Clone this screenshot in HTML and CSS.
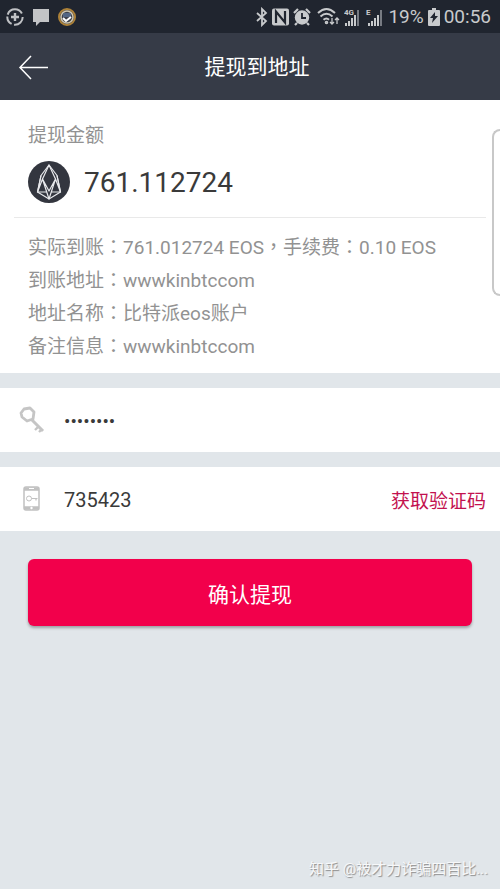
FILE: index.html
```html
<!DOCTYPE html>
<html lang="zh-CN">
<head>
<meta charset="utf-8">
<meta name="viewport" content="width=device-width, initial-scale=1">
<title>提现到地址</title>
<link rel="stylesheet" href="styles.css">
</head>
<body>
<div class="status">
  <div class="status-left">
    <svg width="20" height="20" viewBox="0 0 20 20" fill="none" stroke="#bfc1c4"><circle cx="10" cy="10" r="7.7" stroke-width="2" stroke-dasharray="13 2.5 9 2 18 3.9"/><path d="M10 6v8M6 10h8" stroke-width="2.4"/></svg>
    <svg width="18" height="20" viewBox="0 0 18 20"><path d="M1 2h16v13H8l-4 4v-4H1z" fill="#c3c4c6"/></svg>
    <svg width="20" height="20" viewBox="0 0 20 20"><circle cx="10" cy="10" r="8" fill="#3b414e" stroke="#ad8238" stroke-width="2"/><circle cx="10" cy="10" r="6" fill="none" stroke="#cfc6ae" stroke-width="1.5"/><path d="M6 6h8v4H6z" fill="#526684"/><path d="M6 11l3 3 5-4" fill="none" stroke="#fff" stroke-width="2"/></svg>
  </div>
  <div class="status-right">
    <svg width="12" height="20" viewBox="0 0 12 20" fill="none" stroke="#c8cacc" stroke-width="1.8"><path d="M1 6l9 8-4 4V2l4 4-9 8"/></svg>
    <svg width="17" height="18" viewBox="0 0 17 18"><rect width="17" height="17" y=".5" rx="2" fill="#c8cacc"/><path d="M4 15V3.500l9 11V3" fill="none" stroke="#20252f" stroke-width="2.200"/></svg>
    <svg width="18" height="18" viewBox="0 0 18 18"><circle cx="9" cy="9.500" r="7.200" fill="#c8cacc"/><path d="M1 5l4-4M17 5l-4-4M4 15l-2 2M14 15l2 2" stroke="#c8cacc" stroke-width="2.200"/><path d="M9 5v5h4" fill="none" stroke="#20252f" stroke-width="1.800"/></svg>
    <svg class="wifi" width="23" height="19" viewBox="0 0 23 19" fill="none" stroke="#c8cacc" stroke-width="2"><path d="M1 6q8.500-8 17 0M3.500 9.500q6-5.500 12 0M6.500 12.800q3-2.600 5.500 0"/><circle cx="9.500" cy="15.500" r=".8"/><path d="M15 11v6M13 15l2 2 2-2M20 17v-6M18 13l2-2 2 2" stroke-width="1.300"/></svg>
    <svg width="17" height="20" viewBox="0 0 17 20" fill="#c8cacc"><text x="0" y="8" class="net">4G</text><path d="M1 16h2v3H1zM4 14h2v5H4zM7 11h2v8H7zM10 8h2v11h-2z"/><path d="M13 3h2v16h-2z" fill="#777b82"/></svg>
    <svg width="19" height="20" viewBox="0 0 19 20" fill="#c8cacc"><text x="1" y="8" class="net">E</text><path d="M3 16h2v3H3zM6 14h2v5H6zM9 11h2v8H9zM12 8h2v11h-2z"/><path d="M15 3h2v16h-2z" fill="#777b82"/></svg>
    <span>19%</span>
    <svg width="12" height="18" viewBox="0 0 12 18"><path d="M4 0h4v2h3q1 0 1 1v14q0 1-1 1H1q-1 0-1-1V3q0-1 1-1h3z" fill="#c8cacc"/><path d="M7 4l-5 6h3l-1 5 6-7H7z" fill="#20252f"/></svg>
    <span>00:56</span>
  </div>
</div>
<header class="bar">
  <button class="back" type="button" aria-label="返回"><svg width="32" height="26" viewBox="0 0 32 26" fill="none" stroke="#fff" stroke-width="1.500"><path d="M13 2L2 13.500 13 25M2 13.500h28"/></svg></button>
  <h1>提现到地址</h1>
</header>
<main>
  <section class="card summary">
    <div class="label">提现金额</div>
    <div class="amount">
      <svg width="42" height="42" viewBox="0 0 42 42" fill="none" stroke="#e8e9ec" stroke-width="1.200" stroke-linejoin="round"><circle cx="21" cy="21" r="21" fill="#33363f" stroke="none"/><path d="M21 4L13 14.500 9.500 31 21 38l11.500-7L29 14.500z"/><path d="M21 4L14.500 18 21 30l6.500-12zM13 14.500L9.500 31h9M29 14.500L32.500 31h-9M14.500 18L21 38l6.500-20M14.500 18L9.500 31M27.500 18l5 13"/></svg>
      <span>761.112724</span>
    </div>
    <div class="details">
      <p>实际到账<span class="mark" lang="zh-TW">：</span>761.012724 EOS<span class="mark" lang="zh-TW">，</span>手续费<span class="mark" lang="zh-TW">：</span>0.10 EOS</p>
      <p>到账地址<span class="mark" lang="zh-TW">：</span>wwwkinbtccom</p>
      <p>地址名称<span class="mark" lang="zh-TW">：</span>比特派eos账户</p>
      <p>备注信息<span class="mark" lang="zh-TW">：</span>wwwkinbtccom</p>
    </div>
    <div class="edge-panel"></div>
  </section>
  <form>
    <div class="card field">
      <label for="password" aria-label="密码"><svg width="28" height="28" viewBox="0 0 28 28" fill="none" stroke="#c5c5c5"><path d="M6 3l6-1 4 4-1 7-6 2-5-4-1-4z" stroke-width="2.800" stroke-linejoin="round"/><path d="M13 13l12 12" stroke-width="3"/><path d="M21 20l-4 4M24 23l-3 3" stroke-width="2.400"/></svg></label>
      <input id="password" type="password" value="abcdefgh">
    </div>
    <div class="card field">
      <label for="code" aria-label="验证码"><svg width="28" height="28" viewBox="0 0 28 28" fill="none" stroke="#c1c1c1"><rect x="6" y="2" width="15" height="23" rx="2" stroke-width="1.500"/><path d="M6 4h15M6 23h15" stroke-width="3.500"/><path d="M11 3.500h5" stroke="#fff"/><circle cx="13.500" cy="23" r="1.200" fill="#fff" stroke="none"/><circle cx="11" cy="13.500" r="2.500"/><path d="M13.500 13.500h6M18 13.500v2" stroke-width="1.200"/></svg></label>
      <input id="code" class="code" type="text" inputmode="numeric" value="735423">
      <button class="send" type="button">获取验证码</button>
    </div>
    <button class="confirm" type="button">确认提现</button>
  </form>
</main>
<div class="watermark">知乎 @被才力诈骗四百比...</div>
</body>
</html>
```

FILE: styles.css
```css
* { box-sizing: border-box; }

body {
  margin: 0;
  min-height: 100vh;
  position: relative;
  background: #e1e6ea;
  color: #3a3a3a;
  font-family: Roboto, "Noto Sans CJK SC", sans-serif;
  font-size: 19px;
}

h1, p { margin: 0; }
svg { display: block; flex: none; }
button { border: 0; padding: 0; background: none; font: inherit; cursor: pointer; }

.status {
  display: flex;
  justify-content: space-between;
  align-items: center;
  height: 33px;
  padding: 0 9px 0 5px;
  background: #20252f;
  color: #c8cacc;
  font-size: 19px;
}
.status-left { display: flex; gap: 7px; }
.status-right { display: flex; align-items: center; gap: 4px; }
.wifi { margin-left: 2px; }
.net { font-size: 8px; font-weight: 700; }

.bar {
  display: grid;
  grid-template-columns: 68px 1fr 54px;
  align-items: center;
  height: 67px;
  background: #363b47;
  color: #fff;
}
.bar h1 { font-size: 21px; font-weight: 400; line-height: 28px; text-align: center; }
.back { justify-self: center; }

.card { background: #fff; }

.summary { position: relative; padding: 22px 14px 10px; }
.label { padding-left: 14px; line-height: 28px; color: #929292; }
.amount {
  display: flex;
  align-items: center;
  gap: 14px;
  padding: 11px 14px 14px;
  border-bottom: 1px solid #e9e9e9;
  font-size: 28px;
}
.details { padding: 13px 14px 0; color: #929292; line-height: 33px; }
.mark { font-family: "Noto Sans CJK TC", sans-serif; line-height: 1; }

.edge-panel {
  position: absolute;
  top: 29px;
  right: 0;
  width: 8px;
  height: 167px;
  border: 2px solid #c8c8c8;
  border-right: 0;
  border-radius: 8px 0 0 8px;
}

.field {
  display: flex;
  align-items: center;
  height: 64px;
  margin-top: 15px;
  padding: 0 14px 0 18px;
}
.field label { width: 46px; }
.field input {
  flex: 1;
  min-width: 0;
  border: 0;
  padding: 2px 0 0;
  outline: 0;
  background: none;
  color: #3a3a3a;
  font: inherit;
}
.field .code { font-size: 20px; }
.send { color: #c3124f; }

.confirm {
  display: block;
  width: calc(100% - 56px);
  height: 67px;
  margin: 28px auto;
  border-radius: 6px;
  background: #f2004b;
  box-shadow: 0 2px 3px #0000004d;
  color: #fff;
  font-size: 21px;
}

.watermark {
  position: absolute;
  right: 12px;
  bottom: 11px;
  color: #f7f8f9;
  font-size: 15px;
  text-shadow: 1px 1px 1px #8c8c8c;
}
```
